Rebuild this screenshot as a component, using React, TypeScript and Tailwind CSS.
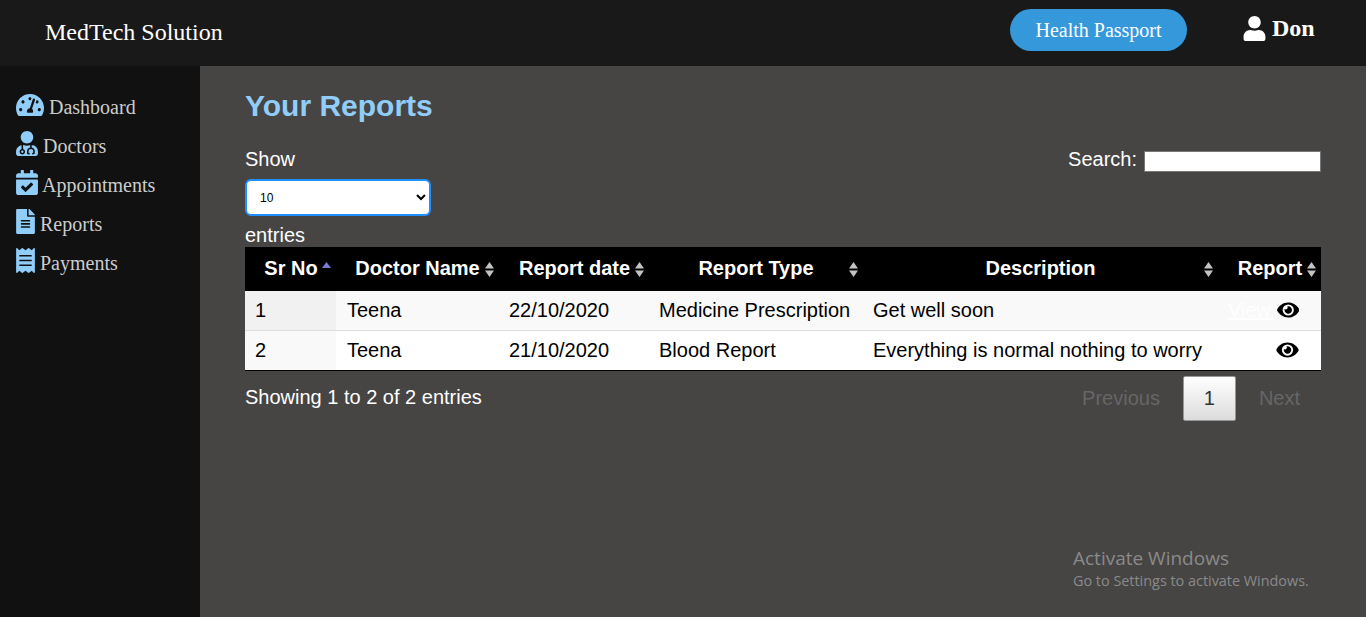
import { FaCalendarCheck, FaEye, FaFileAlt, FaReceipt, FaTachometerAlt, FaUser, FaUserMd } from 'react-icons/fa';

const navItems = [
  { label: 'Dashboard', icon: FaTachometerAlt, iconClass: 'w-7 h-7', gap: 'gap-[5px]' },
  { label: 'Doctors', icon: FaUserMd, iconClass: 'w-[22px] h-[25px]', gap: 'gap-[5px]' },
  { label: 'Appointments', icon: FaCalendarCheck, iconClass: 'w-[22px] h-[25px]', gap: 'gap-1' },
  { label: 'Reports', icon: FaFileAlt, iconClass: 'w-[19px] h-[25px]', gap: 'gap-[5px]' },
  { label: 'Payments', icon: FaReceipt, iconClass: 'w-[19px] h-[25px]', gap: 'gap-[5px]' },
];

const reports = [
  { id: 1, doctor: 'Teena', date: '22/10/2020', type: 'Medicine Prescription', description: 'Get well soon', view: true },
  { id: 2, doctor: 'Teena', date: '21/10/2020', type: 'Blood Report', description: 'Everything is normal nothing to worry', view: false },
];

function SortIcon({ active, last }: { active?: boolean; last?: boolean }) {
  if (active) {
    return (
      <svg viewBox="0 0 9 6" className="w-[9px] h-[6px] absolute right-[5px] top-[15px]">
        <path d="M4.5 0L9 6H0z" fill="#7b7bd6" />
      </svg>
    );
  }
  return (
    <svg viewBox="0 0 9 15" className={`w-[9px] h-[15px] absolute top-[15px] ${last ? 'right-[5px]' : 'right-[4px]'}`}>
      <path d="M4.5 0L9 6.5H0zM4.5 15L9 8.5H0z" fill="#c4c4c4" />
    </svg>
  );
}

export default function App() {
  return (
    <div className="h-screen flex flex-col overflow-hidden relative font-['Liberation_Sans',sans-serif]">
      <header className="h-[66px] shrink-0 bg-[#191919] flex items-center text-white font-['Liberation_Serif',serif]">
        <div className="pl-[45px] mt-[-2px] text-2xl">MedTech Solution</div>
        <button className="ml-auto w-[177px] h-[42px] mt-[-6px] rounded-full bg-[#3498db] text-xl text-white">
          Health Passport
        </button>
        <div className="w-[179px] pl-[56px] flex items-center gap-[6px] mt-[-10px] text-2xl font-bold">
          <FaUser className="w-[23px] h-[25px]" />
          <span>Don</span>
        </div>
      </header>

      <div className="flex-1 flex min-h-0">
        <aside className="w-[200px] shrink-0 bg-[#111111] pt-[19px] pl-4 font-['Liberation_Serif',serif] text-xl text-[#cccccc]">
          {navItems.map((item) => (
            <div key={item.label} className={`h-[39px] flex items-center ${item.gap}`}>
              <item.icon className={`${item.iconClass} text-[#90cdf9]`} />
              <span className="mt-1">{item.label}</span>
            </div>
          ))}
        </aside>

        <main className="flex-1 bg-[#464544] pl-[45px] pr-[45px] text-white text-xl">
          <h1 className="mt-[22px] text-3xl leading-[36px] font-bold text-[#90cdf9]">Your Reports</h1>

          <div className="mt-6 flex justify-between items-start">
            <div>
              <div className="leading-[23px]">Show</div>
              <select className="mt-2 block w-[186px] h-[37px] rounded-[6px] border-2 border-[#1e90ff] bg-white pl-[9px] pr-1 text-xs text-black">
                <option>10</option>
              </select>
              <div className="mt-2 leading-[23px]">entries</div>
            </div>
            <div className="flex items-start leading-[23px]">
              <span>Search:</span>
              <input className="ml-[7px] w-[177px] h-[21px] mt-[3px] bg-white border border-[#767676]" />
            </div>
          </div>

          <table className="w-[1076px] table-fixed border-collapse border-b border-black text-black">
            <thead>
              <tr className="h-[44px] bg-black text-white font-bold">
                <th className="relative w-[91px] text-center pl-[1px] pb-[2px]">Sr No<SortIcon active /></th>
                <th className="relative w-[162px] text-center pl-[1px] pb-[2px]">Doctor Name<SortIcon /></th>
                <th className="relative w-[150px] text-center pl-[3px] pb-[2px]">Report date<SortIcon /></th>
                <th className="relative w-[214px] text-center pl-[2px] pb-[2px]">Report Type<SortIcon /></th>
                <th className="relative w-[355px] text-center pl-[2px] pb-[2px]">Description<SortIcon /></th>
                <th className="relative w-[104px] text-center pl-[2px] pb-[2px]">Report<SortIcon last /></th>
              </tr>
            </thead>
            <tbody>
              {reports.map((r) => (
                <tr key={r.id} className={r.view ? 'h-[39px] bg-[#f9f9f9] border-b border-[#dddddd]' : 'h-[40px] bg-white'}>
                  <td className={`pl-[10px] ${r.view ? 'bg-[#f1f1f1]' : 'bg-[#f9f9f9]'}`}>{r.id}</td>
                  <td className="pl-[11px]">{r.doctor}</td>
                  <td className="pl-[11px]">{r.date}</td>
                  <td className="pl-[11px]">{r.type}</td>
                  <td className="pl-[11px]">{r.description}</td>
                  <td className="pl-[11px]">
                    <div className="flex items-center justify-end pr-[22px]">
                      {r.view && <span className="text-white underline whitespace-pre">View </span>}
                      <FaEye className="w-[23px] h-[20px] text-black" />
                    </div>
                  </td>
                </tr>
              ))}
            </tbody>
          </table>

          <div className="flex justify-between items-start mt-[5px]">
            <div className="mt-[10px] leading-[23px]">Showing 1 to 2 of 2 entries</div>
            <div className="flex items-center text-[#666666]">
              <span>Previous</span>
              <span className="ml-[23px] w-[53px] h-[45px] flex items-center justify-center rounded-[2px] border border-[#979797] bg-linear-to-b from-white to-[#dcdcdc] text-[#333333]">
                1
              </span>
              <span className="ml-[23px] mr-[21px]">Next</span>
            </div>
          </div>
        </main>
      </div>

      <div className="absolute left-[1073px] top-[546px] text-[#8a8a8a] font-['Open_Sans',sans-serif] pointer-events-none">
        <div className="text-[19px] leading-[24px]">Activate Windows</div>
        <div className="text-[14.4px] leading-[22px]">Go to Settings to activate Windows.</div>
      </div>
    </div>
  );
}
